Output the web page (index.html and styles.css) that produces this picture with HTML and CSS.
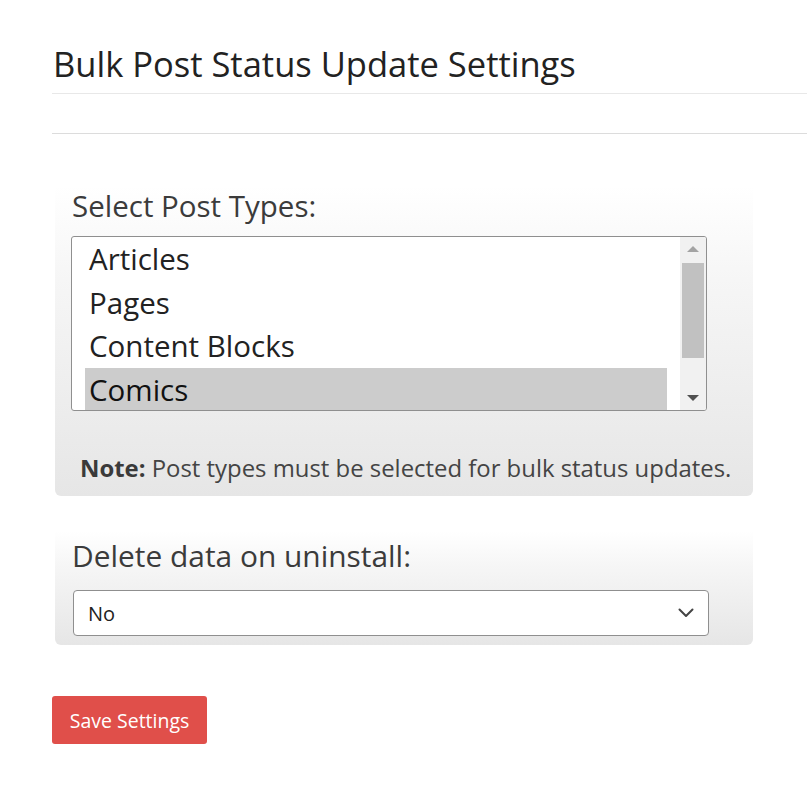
FILE: index.html
```html
<!DOCTYPE html>
<html lang="en">
<head>
<meta charset="utf-8">
<title>Bulk Post Status Update Settings</title>
<link rel="stylesheet" href="styles.css">
</head>
<body>
<div class="page">
  <h1 class="title">Bulk Post Status Update Settings</h1>
  <div class="rule rule-light"></div>
  <div class="rule rule-dark"></div>

  <section class="card card-types">
    <div class="label">Select Post Types:</div>
    <div class="listbox" role="listbox" aria-multiselectable="true">
      <div class="options">
        <div class="option">Articles</div>
        <div class="option">Pages</div>
        <div class="option">Content Blocks</div>
        <div class="option selected">Comics</div>
      </div>
      <div class="scrollbar">
        <span class="arrow arrow-up"></span>
        <span class="thumb"></span>
        <span class="arrow arrow-down"></span>
      </div>
    </div>
    <p class="note"><strong>Note:</strong> Post types must be selected for bulk status updates.</p>
  </section>

  <section class="card card-delete">
    <div class="label label-delete">Delete data on uninstall:</div>
    <div class="dropdown">
      <span class="dropdown-value">No</span>
      <svg class="chevron" width="16" height="10" viewBox="0 0 16 10"><path d="M1.5 1.5 L8 8 L14.5 1.5" fill="none" stroke="#444" stroke-width="2" stroke-linecap="round" stroke-linejoin="round"/></svg>
    </div>
  </section>

  <button class="save" type="button">Save Settings</button>
</div>
</body>
</html>
```
FILE: styles.css
```css
html, body {
  margin: 0;
  padding: 0;
  background: #ffffff;
}
body {
  font-family: "Open Sans", "Noto Sans", "Liberation Sans", sans-serif;
  color: #333;
}
.page {
  padding: 42px 0 0 52px;
}
.title {
  margin: 0 0 0 1px;
  font-size: 34.5px;
  font-weight: 400;
  line-height: 44px;
  color: #222;
  height: 44px;
  white-space: nowrap;
}
.rule {
  height: 1px;
}
.rule-light {
  background: #e8e8e8;
  margin-top: 7px;
}
.rule-dark {
  background: #dcdcdc;
  margin-top: 39px;
}
.card {
  width: 698px;
  margin-left: 3px;
  box-sizing: border-box;
  border-radius: 0 0 6px 6px;
  background: linear-gradient(to bottom, #ffffff 0%, #f6f6f6 30%, #e6e6e6 100%);
}
.card-types {
  margin-top: 52px;
  padding: 0 0 0 17px;
  height: 310px;
}
.label {
  font-size: 29.5px;
  line-height: 40px;
  color: #3b3b3b;
  white-space: nowrap;
}
.label-delete {
  font-size: 29.9px;
}
.listbox {
  margin-top: 10px;
  margin-left: -1px;
  width: 636px;
  height: 175px;
  box-sizing: border-box;
  border: 1px solid #8f8f8f;
  border-radius: 3px;
  background: #fff;
  display: flex;
  overflow: hidden;
}
.options {
  flex: 1;
  padding: 0 13px 0 13px;
  overflow: hidden;
}
.option {
  font-size: 29.5px;
  line-height: 43.5px;
  height: 43.5px;
  padding-left: 4px;
  color: #222;
  white-space: nowrap;
}
.option.selected {
  background: #cccccc;
  color: #111;
}
.scrollbar {
  width: 26px;
  background: #f1f1f1;
  display: flex;
  flex-direction: column;
  align-items: center;
}
.thumb {
  width: 22px;
  height: 95px;
  background: #c1c1c1;
}
.arrow {
  width: 0;
  height: 0;
  border-left: 6px solid transparent;
  border-right: 6px solid transparent;
}
.arrow-up {
  border-bottom: 6px solid #a3a3a3;
  margin: 9px 0 11px;
}
.arrow-down {
  border-top: 6px solid #505050;
  margin-top: auto;
  margin-bottom: 9px;
}
.note {
  margin: 43px 0 0 8px;
  font-size: 23.9px;
  line-height: 28px;
  color: #444;
  white-space: nowrap;
}
.note strong {
  font-weight: 700;
  color: #3a3a3a;
}
.card-delete {
  margin-top: 35px;
  padding: 5px 0 0 17px;
  height: 114px;
}
.dropdown {
  margin-top: 14px;
  margin-left: 1px;
  width: 636px;
  height: 46px;
  box-sizing: border-box;
  border: 1px solid #8f8f8f;
  border-radius: 4px;
  background: #fff;
  display: flex;
  align-items: center;
  justify-content: space-between;
  padding: 0 14px 0 14px;
}
.dropdown-value {
  font-size: 20px;
  color: #222;
}
.save {
  margin-top: 51px;
  display: block;
  width: 155px;
  height: 48px;
  border: none;
  border-radius: 3px;
  background: #e04f4a;
  color: #fff;
  font-family: "Open Sans", "Noto Sans", "Liberation Sans", sans-serif;
  font-size: 19.5px;
  padding: 0;
}
```
